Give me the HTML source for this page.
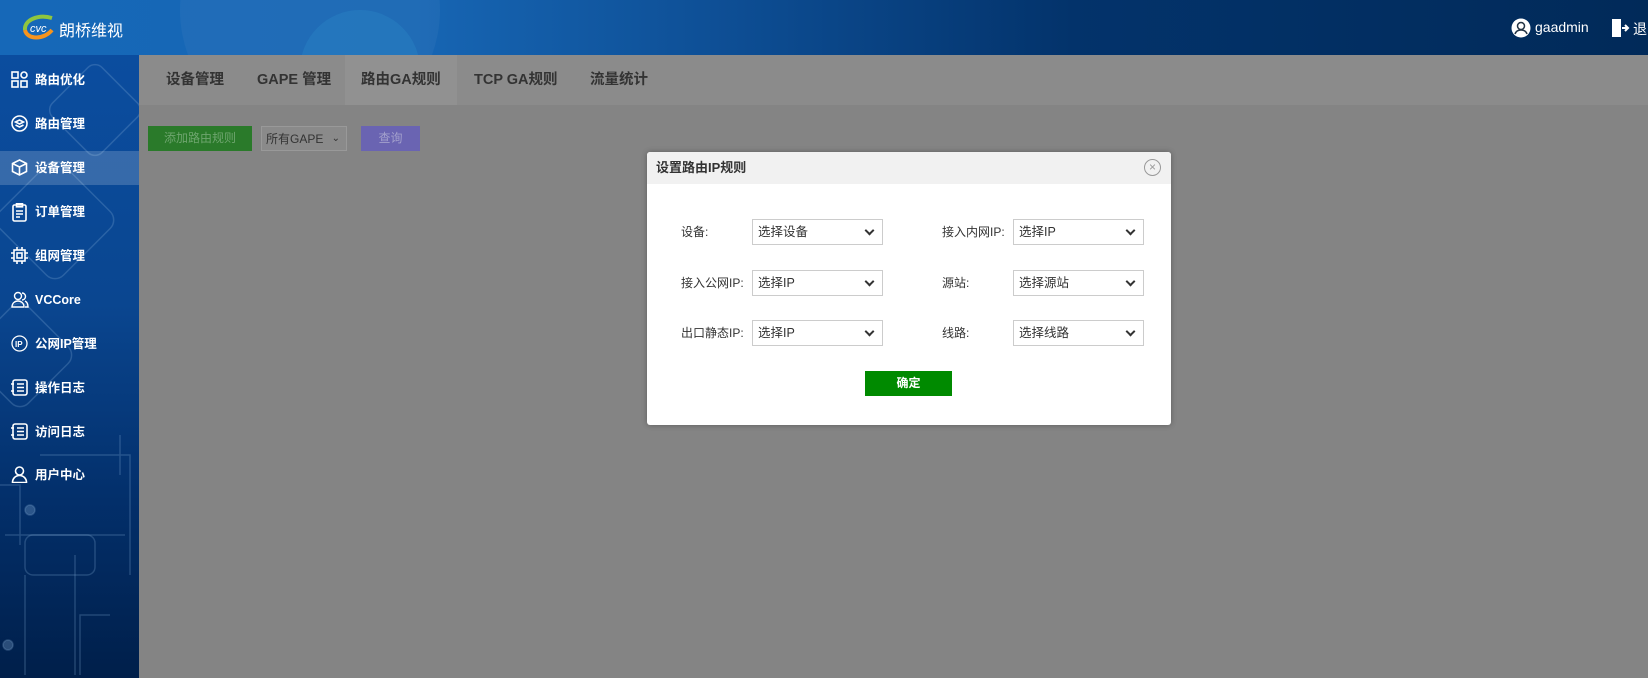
<!DOCTYPE html>
<html><head><meta charset="utf-8">
<style>
*{margin:0;padding:0;box-sizing:border-box}
body{width:1648px;height:679px;overflow:hidden;font-family:"Liberation Sans","Noto Sans CJK SC",sans-serif;background:#fff;position:relative}
.hdr{position:absolute;left:0;top:0;width:1648px;height:55px;background:linear-gradient(90deg,#1668b8 0%,#1766b4 25%,#0d4d93 45%,#03336b 65%,#012a59 100%);overflow:hidden}
.hdr .c1{position:absolute;left:180px;top:-120px;width:260px;height:260px;border-radius:50%;background:rgba(255,255,255,.04)}
.hdr .c2{position:absolute;left:300px;top:10px;width:120px;height:120px;border-radius:50%;background:rgba(60,180,230,.15)}
.logo{position:absolute;left:22px;top:14px}
.logo span{position:absolute;left:37px;top:3px;color:#fff;font-size:16px;white-space:nowrap}
.usr{position:absolute;left:1511px;top:18px;color:#fff;font-size:14px;white-space:nowrap}
.side{position:absolute;left:0;top:55px;width:139px;height:623px;background:linear-gradient(180deg,#0b4d9f 0%,#0a4690 40%,#03306c 70%,#001f4a 100%);overflow:hidden}
.side svg.bg{position:absolute;left:0;top:0}
.item{position:absolute;left:0;width:139px;height:34px;color:#fff;font-size:12.5px;font-weight:bold;line-height:34px;padding-left:35px}
.item.act{background:rgba(255,255,255,.18)}
.item svg{position:absolute;left:11px;top:8px}
.main{position:absolute;left:139px;top:55px;width:1509px;height:623px;background:#848484}
.tabs{position:absolute;left:0;top:0;width:1509px;height:50px;background:#8b8b8b}
.tab{position:absolute;top:0;height:50px;line-height:50px;font-size:14.5px;font-weight:bold;color:#333;white-space:nowrap}
.tabact{position:absolute;left:206px;top:0;width:112px;height:50px;background:#919191}
.btn{position:absolute;top:71px;height:25px;font-size:12px;line-height:25px;text-align:center}
.modal{position:absolute;left:647px;top:152px;width:524px;height:273px;background:#fff;border-radius:3px;box-shadow:0 0 6px rgba(0,0,0,.3)}
.mh{height:32px;background:#f1f1f1;font-size:13px;font-weight:bold;color:#333;line-height:32px;padding-left:9px;border-radius:3px 3px 0 0}
.close{position:absolute;right:10px;top:7px;width:17px;height:17px;border:1px solid #999;border-radius:50%;color:#999;font-size:12px;line-height:14px;text-align:center}
.lbl{position:absolute;font-size:12px;color:#333}
.sel{position:absolute;width:131px;height:26px;border:1px solid #ccc;font-size:12.5px;color:#333;line-height:24px;padding-left:5px;background:#fff}
.sel:after{content:"";position:absolute;right:9px;top:7px;width:5px;height:5px;border-right:2px solid #333;border-bottom:2px solid #333;transform:rotate(45deg)}
.ok{position:absolute;left:218px;top:219px;width:87px;height:25px;background:#008a00;color:#fff;font-size:12px;font-weight:bold;text-align:center;line-height:25px}
</style></head><body>
<div class="hdr"><div class="c1"></div><div class="c2"></div>
<div class="logo"><svg width="36" height="26" viewBox="0 0 36 26"><path d="M3 16 C2 6 16 0 30 4" stroke="#8ec63f" stroke-width="4" fill="none"/><path d="M3 16 C5 26 22 26 30 16" stroke="#f7941d" stroke-width="4" fill="none"/><text x="8" y="18" font-size="11" fill="#fff" font-style="italic">cvc</text></svg><span>朗桥维视</span></div>
<div class="usr"><svg width="20" height="20" viewBox="0 0 20 20" style="position:absolute;left:0;top:0"><circle cx="10" cy="10" r="9.5" fill="#fff"/><circle cx="10" cy="8" r="3.5" fill="none" stroke="#234" stroke-width="1.5"/><path d="M4 16c1-3 3-4 6-4s5 1 6 4" fill="none" stroke="#234" stroke-width="1.5"/></svg><span style="position:absolute;left:24px;top:1px">gaadmin</span>
<svg width="20" height="20" viewBox="0 0 20 20" style="position:absolute;left:99px;top:0"><path d="M2 1h9v18H2z" fill="#fff"/><path d="M12 10h6M15 7l3 3-3 3" stroke="#fff" stroke-width="2" fill="none"/></svg><span style="position:absolute;left:122px;top:1px">退出</span></div>
</div>
<div class="side">
<svg class="bg" width="139" height="623" fill="none" stroke="rgba(140,180,220,.25)" stroke-width="1.5"><rect x="60" y="20" width="70" height="70" rx="10" transform="rotate(45 95 55)"/><rect x="10" y="120" width="90" height="90" rx="12" transform="rotate(45 55 165)"/><rect x="-20" y="260" width="80" height="80" rx="12" transform="rotate(45 20 300)"/><path d="M120 420v-40M40 400h90v120M5 480h120M25 520v100M75 500v120M110 560h-30v60M0 430h20v60"/><rect x="25" y="480" width="70" height="40" rx="8"/><circle cx="30" cy="455" r="5" fill="rgba(140,180,220,.3)"/><circle cx="8" cy="590" r="5" fill="rgba(140,180,220,.3)"/></svg>
<div class="item" style="top:8px"><svg width="17" height="17" viewBox="0 0 17 17" fill="none" stroke="#fff" stroke-width="1.6"><rect x="1" y="1" width="6" height="6"/><rect x="1" y="10" width="6" height="6"/><rect x="10" y="10" width="6" height="6"/><circle cx="13" cy="4" r="3"/></svg>路由优化</div>
<div class="item" style="top:52px"><svg width="17" height="17" viewBox="0 0 17 17" fill="none" stroke="#fff" stroke-width="1.6"><circle cx="8.5" cy="8.5" r="7.5"/><path d="M4.5 7l4-2 4 2-4 2z"/><path d="M4.5 10l4 2 4-2"/></svg>路由管理</div>
<div class="item act" style="top:96px"><svg width="17" height="17" viewBox="0 0 17 17" fill="none" stroke="#fff" stroke-width="1.6"><path d="M8.5 1l7 3.5v8l-7 3.5-7-3.5v-8z"/><path d="M1.5 4.5l7 3.5 7-3.5M8.5 8v8"/></svg>设备管理</div>
<div class="item" style="top:140px"><svg width="17" height="19" viewBox="0 0 17 19" fill="none" stroke="#fff" stroke-width="1.6"><rect x="2" y="2" width="13" height="16" rx="1.5"/><rect x="5.5" y="0.8" width="6" height="3"/><path d="M5 8h7M5 11h7M5 14h4"/></svg>订单管理</div>
<div class="item" style="top:184px"><svg width="17" height="17" viewBox="0 0 17 17" fill="none" stroke="#fff" stroke-width="1.6"><rect x="3" y="3" width="11" height="11"/><rect x="6" y="6" width="5" height="5"/><path d="M0 6h3M0 11h3M14 6h3M14 11h3M6 0v3M11 0v3M6 14v3M11 14v3"/></svg>组网管理</div>
<div class="item" style="top:228px"><svg width="18" height="17" viewBox="0 0 18 17" fill="none" stroke="#fff" stroke-width="1.4"><circle cx="7" cy="5" r="3.5"/><path d="M1 16c0-4 3-6 6-6s6 2 6 6z"/><path d="M11 2a3.5 3.5 0 0 1 0 7M14 10c2 1 3 3 3 6h-3"/></svg>VCCore</div>
<div class="item" style="top:272px"><svg width="17" height="17" viewBox="0 0 17 17"><circle cx="8.5" cy="8.5" r="7.5" fill="none" stroke="#fff" stroke-width="1.3"/><text x="4" y="12" font-size="8" fill="#fff" font-family="Liberation Sans">IP</text></svg>公网IP管理</div>
<div class="item" style="top:316px"><svg width="18" height="17" viewBox="0 0 18 17" fill="none" stroke="#fff" stroke-width="1.6"><rect x="2" y="1" width="14" height="15" rx="2"/><path d="M6 5h7M6 8.5h7M6 12h7M0 5h3M0 12h3"/></svg>操作日志</div>
<div class="item" style="top:360px"><svg width="18" height="17" viewBox="0 0 18 17" fill="none" stroke="#fff" stroke-width="1.6"><rect x="2" y="1" width="14" height="15" rx="2"/><path d="M6 5h7M6 8.5h7M6 12h7M0 5h3M0 12h3"/></svg>访问日志</div>
<div class="item" style="top:403px"><svg width="17" height="17" viewBox="0 0 17 17" fill="none" stroke="#fff" stroke-width="1.6"><circle cx="8.5" cy="5" r="4"/><path d="M1.5 16.5c0-4 3-7 7-7s7 3 7 7z"/></svg>用户中心</div>
</div>
<div class="main">
<div class="tabs"><div class="tabact"></div>
<div class="tab" style="left:27px">设备管理</div>
<div class="tab" style="left:118px">GAPE 管理</div>
<div class="tab" style="left:222px">路由GA规则</div>
<div class="tab" style="left:335px">TCP GA规则</div>
<div class="tab" style="left:451px">流量统计</div>
</div>
<div class="btn" style="left:9px;width:104px;background:#2a7a2a;color:#6ea56e">添加路由规则</div>
<div class="btn" style="left:122px;width:86px;background:#8a8a8a;border:1px solid #999;color:#333;text-align:left;padding-left:4px">所有GAPE<span style="position:absolute;right:6px;top:-1px;font-size:10px">&#8964;</span></div>
<div class="btn" style="left:222px;width:59px;background:#6a64b2;color:#a3a0cc">查询</div>
</div>
<div class="modal">
<div class="mh">设置路由IP规则</div><div class="close">×</div>
<div class="lbl" style="left:34px;top:71px">设备:</div><div class="sel" style="left:105px;top:67px">选择设备</div>
<div class="lbl" style="left:34px;top:122px">接入公网IP:</div><div class="sel" style="left:105px;top:118px">选择IP</div>
<div class="lbl" style="left:34px;top:172px">出口静态IP:</div><div class="sel" style="left:105px;top:168px">选择IP</div>
<div class="lbl" style="left:295px;top:71px">接入内网IP:</div><div class="sel" style="left:366px;top:67px">选择IP</div>
<div class="lbl" style="left:295px;top:122px">源站:</div><div class="sel" style="left:366px;top:118px">选择源站</div>
<div class="lbl" style="left:295px;top:172px">线路:</div><div class="sel" style="left:366px;top:168px">选择线路</div>
<div class="ok">确定</div>
</div>
</body></html>
